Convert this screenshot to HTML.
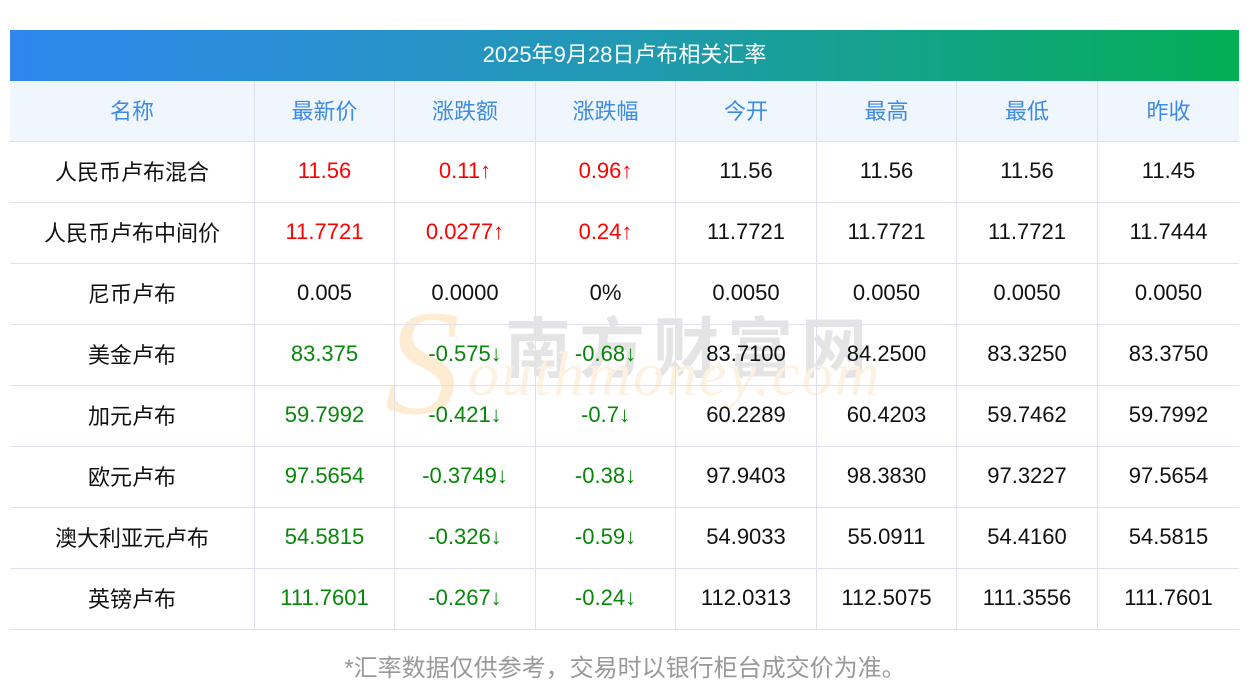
<!DOCTYPE html>
<html><head><meta charset="utf-8"><style>
body{margin:0;width:1250px;height:697px;background:#fff;font-family:"Liberation Sans","Noto Sans CJK SC",sans-serif;position:relative;overflow:hidden}
.title{position:absolute;left:10px;top:30px;width:1229px;height:51px;background:linear-gradient(90deg,#2f86ee,#2199b3 50%,#03ae55);color:#fff;font-size:22px;line-height:49px;text-align:center}
.tbl{position:absolute;left:10px;top:81px;width:1229px;z-index:2}
.row{display:flex;height:61px}
.row div{box-sizing:border-box;height:61px;border-bottom:1px solid #dfe1ec;border-right:1px solid #dfe1ec;text-align:center;font-size:22px;color:#111;line-height:57px}
.row div:last-child{border-right:none}
.row.h div{background:#f0f6fe;color:#3d8be0}
.row div:nth-child(1){width:245px}.row div:nth-child(2){width:140px}.row div:nth-child(3){width:141px}.row div:nth-child(4){width:140px}.row div:nth-child(5){width:141px}.row div:nth-child(6){width:140px}.row div:nth-child(7){width:141px}.row div:nth-child(8){width:141px}
.z{position:relative;top:2px}
.r{color:#f00!important}.g{color:#08860a!important}
.wm{position:absolute;z-index:1;white-space:nowrap}
.foot{position:absolute;top:648px;left:0;width:1250px;text-align:center;font-size:24px;color:#999}
</style></head><body>
<div class="title">2025年9月28日卢布相关汇率</div>
<div class="wm" style="left:505px;top:296px;font-size:66px;color:#e4e4e4;letter-spacing:8px;font-weight:bold">南方财富网</div>
<div class="wm" style="left:385px;top:288px;font-size:150px;color:#fdebd2;font-family:'Liberation Serif',serif;font-style:italic;line-height:1">S</div>
<div class="wm" style="left:468px;top:340px;font-size:62px;color:#fdf2e2;font-family:'Liberation Serif',serif;font-style:italic;letter-spacing:2px">outhmoney.com</div>
<div class="tbl">
<div class="row h"><div><span class="z">名称</span></div><div><span class="z">最新价</span></div><div><span class="z">涨跌额</span></div><div><span class="z">涨跌幅</span></div><div><span class="z">今开</span></div><div><span class="z">最高</span></div><div><span class="z">最低</span></div><div><span class="z">昨收</span></div></div>
<div class="row"><div><span class="z">人民币卢布混合</span></div><div class="r">11.56</div><div class="r">0.11↑</div><div class="r">0.96↑</div><div>11.56</div><div>11.56</div><div>11.56</div><div>11.45</div></div>
<div class="row"><div><span class="z">人民币卢布中间价</span></div><div class="r">11.7721</div><div class="r">0.0277↑</div><div class="r">0.24↑</div><div>11.7721</div><div>11.7721</div><div>11.7721</div><div>11.7444</div></div>
<div class="row"><div><span class="z">尼币卢布</span></div><div>0.005</div><div>0.0000</div><div>0%</div><div>0.0050</div><div>0.0050</div><div>0.0050</div><div>0.0050</div></div>
<div class="row"><div><span class="z">美金卢布</span></div><div class="g">83.375</div><div class="g">-0.575↓</div><div class="g">-0.68↓</div><div>83.7100</div><div>84.2500</div><div>83.3250</div><div>83.3750</div></div>
<div class="row"><div><span class="z">加元卢布</span></div><div class="g">59.7992</div><div class="g">-0.421↓</div><div class="g">-0.7↓</div><div>60.2289</div><div>60.4203</div><div>59.7462</div><div>59.7992</div></div>
<div class="row"><div><span class="z">欧元卢布</span></div><div class="g">97.5654</div><div class="g">-0.3749↓</div><div class="g">-0.38↓</div><div>97.9403</div><div>98.3830</div><div>97.3227</div><div>97.5654</div></div>
<div class="row"><div><span class="z">澳大利亚元卢布</span></div><div class="g">54.5815</div><div class="g">-0.326↓</div><div class="g">-0.59↓</div><div>54.9033</div><div>55.0911</div><div>54.4160</div><div>54.5815</div></div>
<div class="row"><div><span class="z">英镑卢布</span></div><div class="g">111.7601</div><div class="g">-0.267↓</div><div class="g">-0.24↓</div><div>112.0313</div><div>112.5075</div><div>111.3556</div><div>111.7601</div></div>
</div>
<div class="foot">*汇率数据仅供参考，交易时以银行柜台成交价为准。</div>
</body></html>
